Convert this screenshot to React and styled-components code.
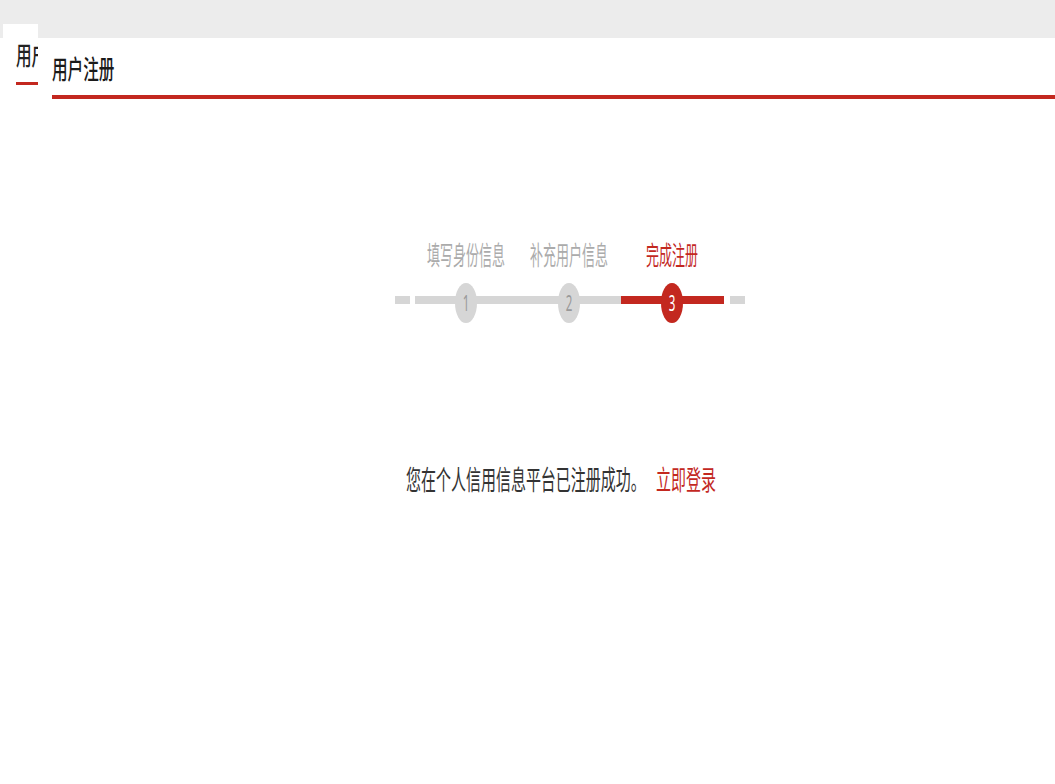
import React from "react";
import styled, { createGlobalStyle } from "styled-components";

const Global = createGlobalStyle`
  html, body { margin: 0; padding: 0; background: #fff; }
  body { font-family: "Noto Sans CJK SC", "Liberation Sans", sans-serif; }
`;

const RED = "#c3281f";
const GRAY = "#d6d6d6";

const Page = styled.div`
  width: 1055px;
  min-height: 784px;
  display: flex;
  flex-direction: column;
`;

const TopBar = styled.div`
  height: 38px;
  background: #ececec;
  display: flex;
  align-items: flex-end;
  padding-left: 3px;
`;

const TabTop = styled.div`
  width: 35px;
  height: 14px;
  background: #fff;
`;

const Body = styled.div`
  display: flex;
  flex: 1;
`;

const SideTab = styled.div`
  width: 22px;
  margin-left: 16px;
  overflow: hidden;
  display: flex;
  flex-direction: column;
`;

const Squish = styled.span`
  display: inline-block;
  white-space: nowrap;
  transform: scaleX(${(p) => p.$sx});
  transform-origin: ${(p) => p.$origin || "center"};
`;

const SideText = styled.div`
  font-size: 26px;
  line-height: 32px;
  font-weight: 500;
  color: #222;
  white-space: nowrap;
`;

const SideLine = styled.div`
  height: 3px;
  background: ${RED};
  margin-top: 12px;
`;

const Main = styled.div`
  flex: 1;
  padding-left: 14px;
  display: flex;
  flex-direction: column;
`;

const Header = styled.div`
  padding-top: 14px;
  padding-bottom: 12px;
  border-bottom: 4px solid ${RED};
  font-size: 26px;
  line-height: 31px;
  font-weight: 500;
  color: #1a1a1a;
`;

const Content = styled.div`
  display: flex;
  flex-direction: column;
  align-items: center;
  padding-left: 32px;
  padding-top: 140px;
`;

const Stepper = styled.div`
  display: flex;
  align-items: flex-end;
`;

const Dash = styled.div`
  width: 15px;
  height: 8px;
  background: ${GRAY};
  margin: 0 ${(p) => p.$mr || 0}px 19px ${(p) => p.$ml || 0}px;
`;

const Step = styled.div`
  width: 103px;
  display: flex;
  flex-direction: column;
  align-items: center;
`;

const Label = styled.div`
  font-size: 26px;
  line-height: 30px;
  color: ${(p) => (p.$active ? RED : "#ababab")};
  margin-bottom: 14px;
`;

const Track = styled.div`
  position: relative;
  width: 100%;
  height: 40px;
  display: flex;
  align-items: center;
  justify-content: center;
  &::before {
    content: "";
    position: absolute;
    left: 0;
    right: 0;
    top: 13px;
    height: 8px;
    background: ${(p) => (p.$active ? RED : GRAY)};
  }
`;

const Dot = styled.div`
  position: relative;
  width: 22px;
  height: 40px;
  border-radius: 50%;
  background: ${(p) => (p.$active ? RED : GRAY)};
  color: ${(p) => (p.$active ? "#fff" : "#999")};
  display: flex;
  align-items: center;
  justify-content: center;
  font-family: "Noto Sans", "DejaVu Sans", sans-serif;
  font-size: 21px;
  line-height: 1;
`;

const Message = styled.div`
  margin-top: 140px;
  margin-left: -15px;
  display: flex;
  align-items: center;
  font-size: 27px;
  line-height: 32px;
  color: #333;
`;

const MsgText = styled.span`
  display: flex;
  width: 240px;
  justify-content: flex-start;
`;

const Link = styled.a`
  color: ${RED};
  text-decoration: none;
  display: inline-block;
  width: 62px;
  margin-left: 10px;
  cursor: pointer;
`;

const steps = [
  { label: "填写身份信息", n: 1 },
  { label: "补充用户信息", n: 2 },
  { label: "完成注册", n: 3, active: true },
];

export default function App() {
  return (
    <Page>
      <Global />
      <TopBar>
        <TabTop />
      </TopBar>
      <Body>
        <SideTab>
          <SideText>
            <Squish $sx={0.6} $origin="left">用户</Squish>
          </SideText>
          <SideLine />
        </SideTab>
        <Main>
          <Header>
            <Squish $sx={0.6} $origin="left">用户注册</Squish>
          </Header>
          <Content>
            <Stepper>
              <Dash $mr={5} />
              {steps.map((s) => (
                <Step key={s.n}>
                  <Label $active={s.active}>
                    <Squish $sx={0.5}>{s.label}</Squish>
                  </Label>
                  <Track $active={s.active}>
                    <Dot $active={s.active}>
                      <Squish $sx={0.55}>{s.n}</Squish>
                    </Dot>
                  </Track>
                </Step>
              ))}
              <Dash $ml={6} />
            </Stepper>
            <Message>
              <MsgText>
                <Squish $sx={0.555} $origin="left">您在个人信用信息平台已注册成功。</Squish>
              </MsgText>
              <Link>
                <Squish $sx={0.555} $origin="left">立即登录</Squish>
              </Link>
            </Message>
          </Content>
        </Main>
      </Body>
    </Page>
  );
}
